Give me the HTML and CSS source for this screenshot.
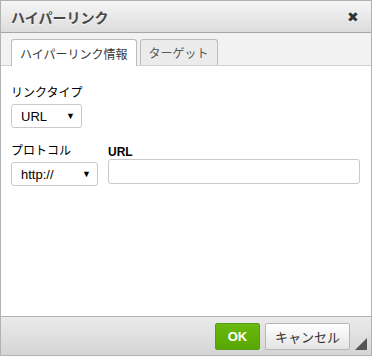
FILE: index.html
```html
<!DOCTYPE html>
<html lang="ja">
<head>
  <meta charset="UTF-8">
  <title>ハイパーリンク</title>
  <link rel="stylesheet" href="styles.css">
</head>
<body>
  <div class="dialog">
    <div class="dialog-title">
      <span>ハイパーリンク</span>
      <span class="close">&#x2716;</span>
    </div>
    <div class="tabs">
      <div class="tab active">ハイパーリンク情報</div>
      <div class="tab">ターゲット</div>
    </div>
    <div class="contents">
      <div class="field">
        <label>リンクタイプ</label>
        <div class="select type-select"><span>URL</span><span class="arrow">&#9660;</span></div>
      </div>
      <div class="row">
        <div class="field">
          <label>プロトコル</label>
          <div class="select proto-select"><span>http://</span><span class="arrow">&#9660;</span></div>
        </div>
        <div class="field grow">
          <label class="bold">URL</label>
          <div class="input"></div>
        </div>
      </div>
    </div>
    <div class="footer">
      <div class="btn ok">OK</div>
      <div class="btn cancel">キャンセル</div>
      <div class="grip"></div>
    </div>
  </div>
</body>
</html>
```

FILE: styles.css
```css
body {
  margin: 0;
  font-family: "Liberation Sans", Arial, "Noto Sans CJK JP", sans-serif;
  color: #333;
}
.dialog {
  width: 372px;
  height: 356px;
  box-sizing: border-box;
  border: 1px solid #b2b2b2;
  display: flex;
  flex-direction: column;
  background: #fff;
}
.dialog-title {
  height: 32px;
  box-sizing: border-box;
  padding: 0 12px 0 10px;
  display: flex;
  align-items: center;
  justify-content: space-between;
  font-size: 14px;
  font-weight: bold;
  color: #474747;
  text-shadow: 0 1px 0 rgba(255, 255, 255, 0.75);
  background: linear-gradient(#f6f6f6, #dcdcdc);
  border-bottom: 1px solid #a6a6a6;
}
.close {
  font-size: 14px;
  font-weight: normal;
  color: #333;
}
.tabs {
  height: 33px;
  box-sizing: border-box;
  background: #f2f2f2;
  padding: 6px 10px 0;
  display: flex;
  align-items: flex-end;
  gap: 3px;
  border-bottom: 1px solid #d1d1d1;
}
.tab {
  height: 26px;
  box-sizing: border-box;
  padding: 0 8px;
  display: flex;
  align-items: center;
  font-size: 12px;
  color: #595959;
  background: #ebebeb;
  border: 1px solid #bcbcbc;
  border-bottom: none;
  border-radius: 3px 3px 0 0;
}
.tab.active {
  background: #fff;
  color: #383838;
  height: 27px;
  margin-bottom: -1px;
}
.contents {
  flex: 1;
  padding: 19px 10px 0;
  font-size: 12px;
  color: #000;
  display: flex;
  flex-direction: column;
  gap: 15px;
}
.field {
  display: flex;
  flex-direction: column;
  align-items: flex-start;
}
.field label {
  margin-bottom: 3px;
  line-height: 16px;
}
.field label.bold {
  font-weight: bold;
  color: #000;
  margin-bottom: 0;
  line-height: 13px;
}
.row {
  display: flex;
  align-items: flex-start;
  gap: 10px;
}
.grow {
  flex: 1;
  padding-right: 1px;
  margin-top: 3px;
  align-items: stretch;
}
.select {
  height: 24px;
  box-sizing: border-box;
  border: 1px solid #c9c9c9;
  border-radius: 3px;
  display: flex;
  align-items: center;
  justify-content: space-between;
  padding: 0 6px 0 9px;
  font-size: 13px;
  color: #000;
  background: #fff;
}
.arrow {
  font-size: 9px;
}
.type-select {
  width: 71px;
}
.proto-select {
  width: 87px;
}
.input {
  height: 25px;
  box-sizing: border-box;
  border: 1px solid #c9c9c9;
  border-radius: 3px;
}
.footer {
  height: 39px;
  box-sizing: border-box;
  border-top: 1px solid #b2b2b2;
  background: linear-gradient(#ebebeb, #d5d5d5);
  display: flex;
  align-items: center;
  justify-content: flex-end;
  padding: 0 21px 0 0;
  gap: 5px;
  position: relative;
}
.btn {
  height: 27px;
  box-sizing: border-box;
  border-radius: 2px;
  display: flex;
  align-items: center;
  justify-content: center;
  font-size: 13px;
}
.ok {
  width: 45px;
  background: linear-gradient(#6ab90f, #58a600);
  border: 1px solid #5a9a1a;
  color: #fff;
  font-weight: bold;
}
.cancel {
  width: 85px;
  background: linear-gradient(#fff, #e4e4e4);
  border: 1px solid #b6b6b6;
  color: #333;
}
.grip {
  position: absolute;
  right: 4px;
  bottom: 5px;
  width: 0;
  height: 0;
  border-left: 12px solid transparent;
  border-bottom: 12px solid #555;
}
```
